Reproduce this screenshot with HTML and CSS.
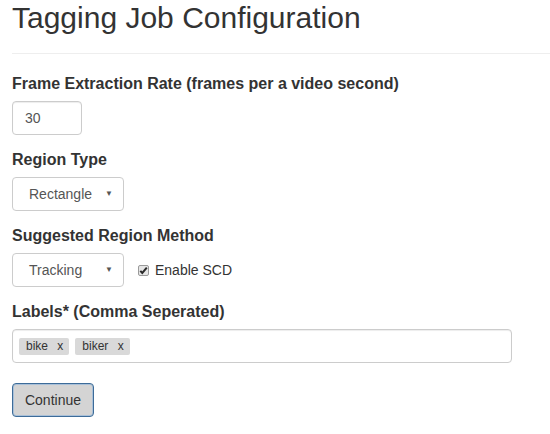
FILE: index.html
```html
<!DOCTYPE html>
<html>
<head>
<meta charset="utf-8">
<link rel="stylesheet" href="styles.css">
</head>
<body>
<div class="page">
  <h1 class="title">Tagging Job Configuration</h1>
  <hr class="rule">
  <div class="group">
    <label class="lbl">Frame Extraction Rate (frames per a video second)</label>
    <div class="control input-num">30</div>
  </div>
  <div class="group">
    <label class="lbl">Region Type</label>
    <div class="control select"><span class="sel-text">Rectangle</span><span class="caret">&#9660;</span></div>
  </div>
  <div class="group">
    <label class="lbl">Suggested Region Method</label>
    <div class="row">
      <div class="control select"><span class="sel-text">Tracking</span><span class="caret">&#9660;</span></div>
      <span class="check">
        <svg class="cbox" width="11" height="11" viewBox="0 0 11 11">
          <rect x="0.5" y="0.5" width="10" height="10" rx="1.5" fill="#e6e6e6" stroke="#9a9a9a"/>
          <path d="M2.3 5.8 L4.3 8 L8.8 2.6" fill="none" stroke="#2a2a2a" stroke-width="2"/>
        </svg>
        <span class="check-text">Enable SCD</span>
      </span>
    </div>
  </div>
  <div class="group">
    <label class="lbl">Labels* (Comma Seperated)</label>
    <div class="control tags">
      <span class="tag">bike <span class="x">x</span></span>
      <span class="tag">biker <span class="x">x</span></span>
    </div>
  </div>
  <button class="btn">Continue</button>
</div>
</body>
</html>
```
FILE: styles.css
```css
* { box-sizing: border-box; }
html, body { margin: 0; padding: 0; background: #fff; }
body {
  font-family: "Liberation Sans", Arial, sans-serif;
  font-size: 14px;
  line-height: 20px;
  color: #333;
}
.page { padding: 0 12px; width: 550px; }
.title {
  margin: 0;
  padding-top: 1px;
  font-size: 30px;
  font-weight: 400;
  line-height: 34px;
  color: #333;
}
.rule {
  margin: 18px -12px 20px 0;
  border: 0;
  border-top: 1px solid #eee;
  height: 0;
}
.group { margin-bottom: 15px; }
.lbl {
  display: block;
  font-weight: 700;
  font-size: 16px;
  margin-bottom: 7px;
}
.group + .group { margin-top: 1px; }
.control {
  height: 34px;
  border: 1px solid #ccc;
  border-radius: 4px;
  background: #fff;
  box-shadow: inset 0 1px 1px rgba(0,0,0,0.075);
}
.input-num {
  width: 70px;
  padding: 6px 12px;
  color: #555;
}
.select {
  width: 112px;
  display: flex;
  align-items: center;
  padding: 0 10px 0 16px;
  color: #555;
  box-shadow: none;
}
.sel-text { flex: 1; }
.caret { font-size: 8px; color: #555; }
.row { display: flex; align-items: center; gap: 14px; }
.check { display: flex; align-items: center; gap: 6px; color: #333; }
.cbox { display: block; }
.tags {
  width: 500px;
  display: flex;
  align-items: center;
  gap: 6px;
  padding: 0 6px;
}
.tag {
  display: inline-block;
  background: #d9d9d9;
  border-radius: 2px;
  font-size: 12px;
  line-height: 17px;
  height: 17px;
  padding: 0 6px 0 7px;
  color: #333;
}
.tag .x { margin-left: 6px; }
.btn {
  display: block;
  margin-top: 20px;
  width: 82px;
  height: 34px;
  padding: 0;
  font-family: "Liberation Sans", Arial, sans-serif;
  font-size: 14px;
  color: #333;
  background: #d4d4d4;
  border: 1px solid #3d6c99;
  border-radius: 4px;
  box-shadow: inset 0 0 0 1px #a9c0d8;
}
```
